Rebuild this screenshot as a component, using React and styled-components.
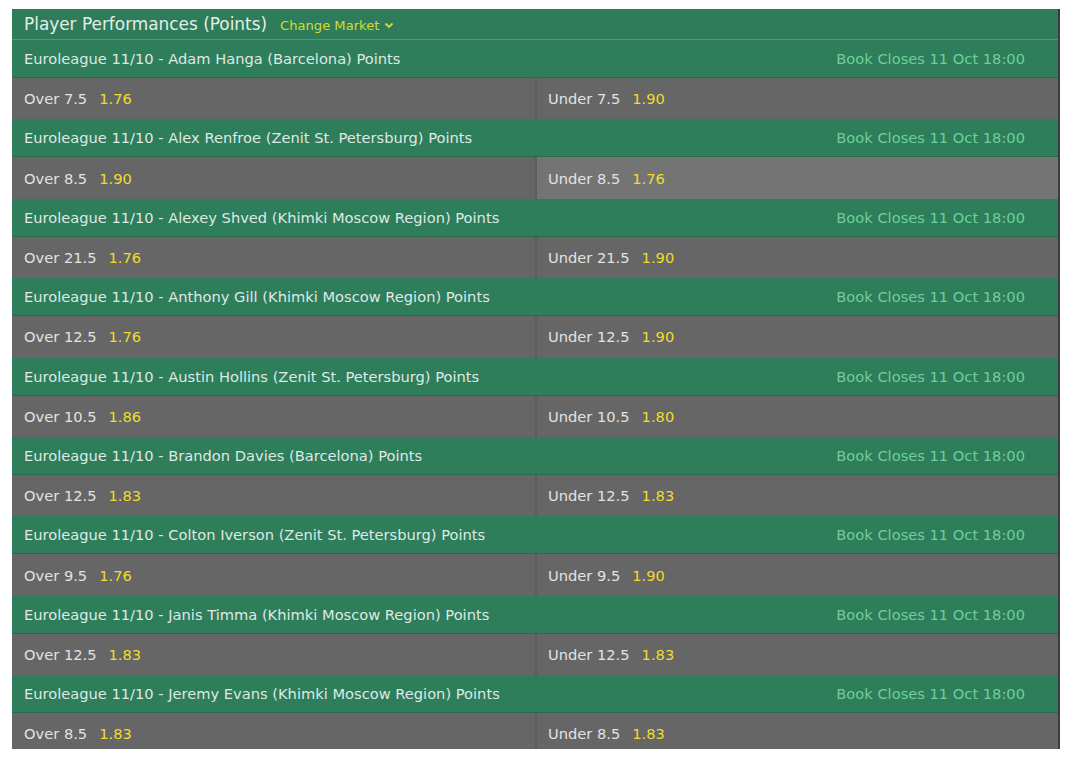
import React from 'react';
import styled, { createGlobalStyle } from 'styled-components';

const markets = [
  { name: 'Adam Hanga (Barcelona)', line: '7.5', over: '1.76', under: '1.90' },
  { name: 'Alex Renfroe (Zenit St. Petersburg)', line: '8.5', over: '1.90', under: '1.76', hover: true },
  { name: 'Alexey Shved (Khimki Moscow Region)', line: '21.5', over: '1.76', under: '1.90' },
  { name: 'Anthony Gill (Khimki Moscow Region)', line: '12.5', over: '1.76', under: '1.90' },
  { name: 'Austin Hollins (Zenit St. Petersburg)', line: '10.5', over: '1.86', under: '1.80' },
  { name: 'Brandon Davies (Barcelona)', line: '12.5', over: '1.83', under: '1.83' },
  { name: 'Colton Iverson (Zenit St. Petersburg)', line: '9.5', over: '1.76', under: '1.90' },
  { name: 'Janis Timma (Khimki Moscow Region)', line: '12.5', over: '1.83', under: '1.83' },
  { name: 'Jeremy Evans (Khimki Moscow Region)', line: '8.5', over: '1.83', under: '1.83' },
];

const App = () => {
  return (
    <>
      <GlobalStyle />
      <Page>
        <Panel>
          <TitleBar>
            <Title>Player Performances (Points)</Title>
            <ChangeMarket>
              Change Market
              <svg width="10" height="7" viewBox="0 0 10 7">
                <path d="M1.5 1.5 L5 5 L8.5 1.5" fill="none" stroke="currentColor" strokeWidth="1.8" />
              </svg>
            </ChangeMarket>
          </TitleBar>
          {markets.map((m) => (
            <Market key={m.name}>
              <MarketHeader>
                <span>Euroleague 11/10 - {m.name} Points</span>
                <BookCloses>Book Closes 11 Oct 18:00</BookCloses>
              </MarketHeader>
              <OddsRow>
                <Cell>
                  Over {m.line}<Price>{m.over}</Price>
                </Cell>
                <Cell $divider $hover={m.hover}>
                  Under {m.line}<Price>{m.under}</Price>
                </Cell>
              </OddsRow>
            </Market>
          ))}
        </Panel>
      </Page>
    </>
  );
};

const GlobalStyle = createGlobalStyle`
  body {
    margin: 0;
    background: #ffffff;
    font-family: 'DejaVu Sans', sans-serif;
  }
`;

const Page = styled.div`
  padding: 9px 0 0 12px;
  width: 1070px;
  height: 759px;
  box-sizing: border-box;
`;

const Panel = styled.div`
  width: 1046px;
  height: 740px;
  overflow: hidden;
  background: #666666;
  border-right: 2px solid #3c3c3c;
  display: flex;
  flex-direction: column;
`;

const TitleBar = styled.div`
  flex: none;
  height: 30px;
  display: flex;
  align-items: center;
  gap: 13px;
  padding-left: 12px;
  background: #2e7c5a;
  border-bottom: 1px solid #4f9a75;
`;

const Title = styled.div`
  font-size: 16.9px;
  color: #e4eee8;
`;

const ChangeMarket = styled.div`
  display: flex;
  align-items: center;
  gap: 5px;
  font-size: 13.1px;
  color: #d2dc2c;
  padding-top: 2px;
`;

const Market = styled.div`
  flex: none;
  display: flex;
  flex-direction: column;
`;

const MarketHeader = styled.div`
  height: 37px;
  display: flex;
  align-items: center;
  justify-content: space-between;
  padding: 0 33px 0 12px;
  background: #2e7d5b;
  border-bottom: 1px solid #296a4d;
  font-size: 14.65px;
  color: #dfe9e3;
`;

const BookCloses = styled.span`
  color: #6fcf9c;
`;

const OddsRow = styled.div`
  height: 41.4px;
  display: grid;
  grid-template-columns: 1fr 1fr;
`;

const Cell = styled.div`
  display: flex;
  align-items: center;
  padding-left: ${(p) => (p.$divider ? '11px' : '12px')};
  font-size: 14.65px;
  color: #e2e2e2;
  background: ${(p) => (p.$hover ? '#747474' : '#666666')};
  border-left: ${(p) => (p.$divider ? '2px solid #5c5c5c' : 'none')};
`;

const Price = styled.span`
  margin-left: 12px;
  color: #f0dc2a;
`;

export default App;
